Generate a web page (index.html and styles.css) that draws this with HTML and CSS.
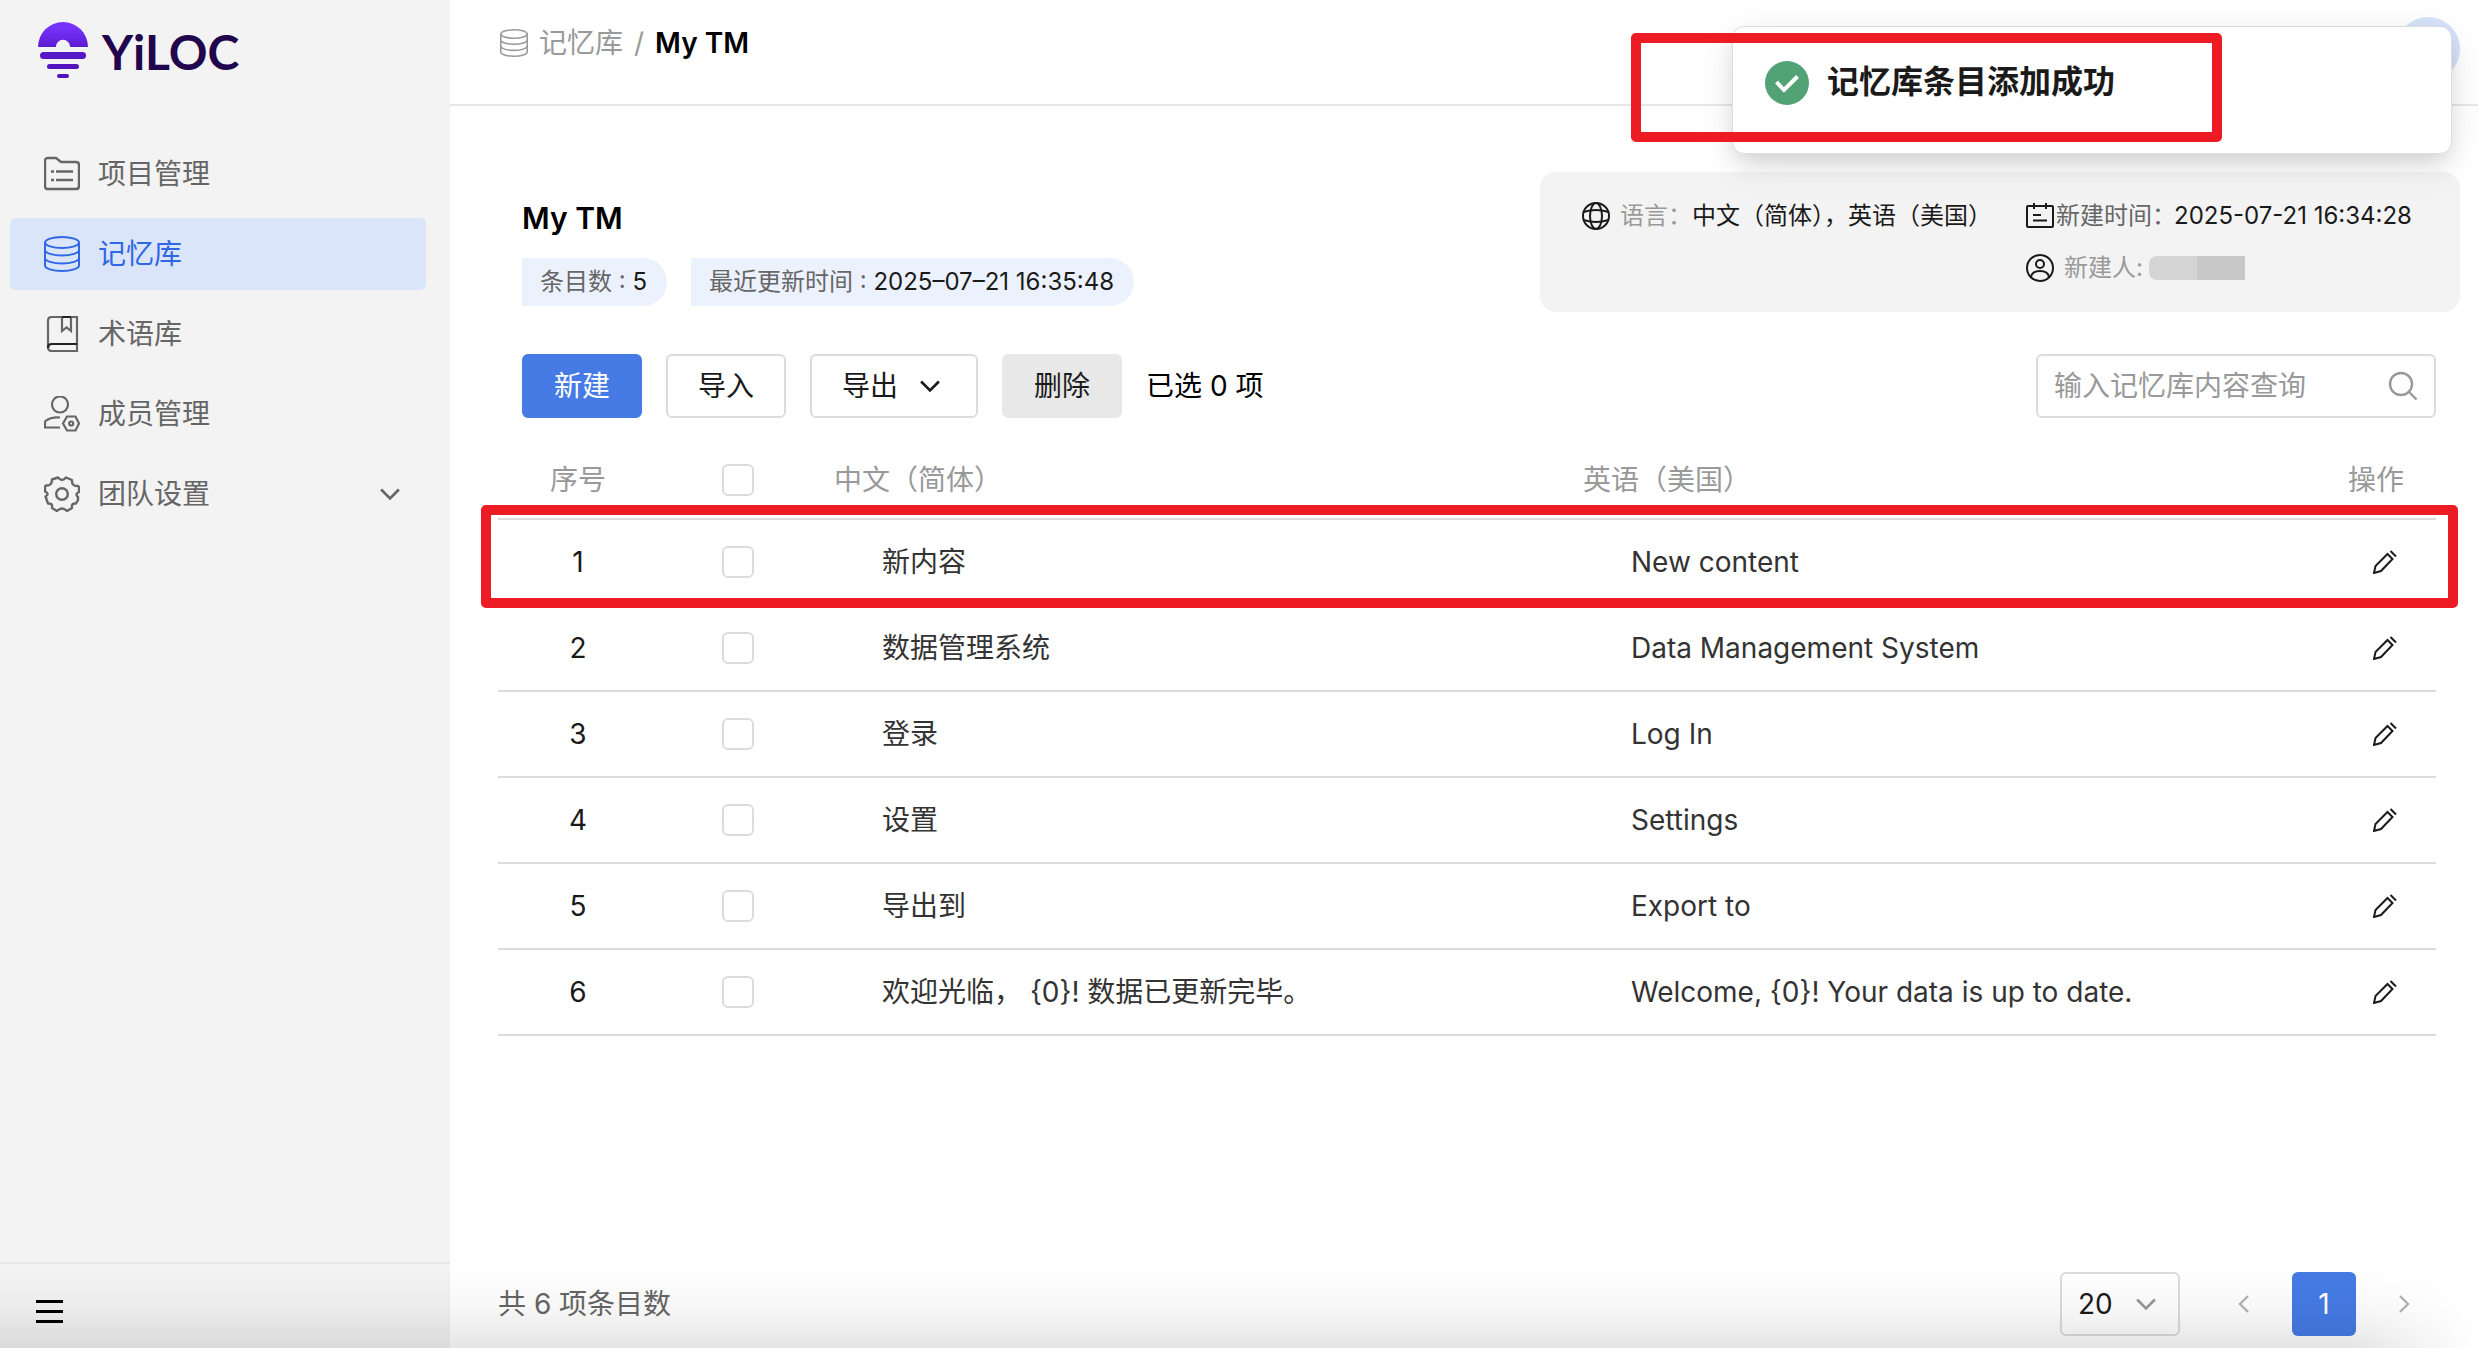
FILE: index.html
```html
<!DOCTYPE html>
<html lang="zh-CN">
<head>
<meta charset="utf-8">
<title>YiLOC - My TM</title>
<link rel="stylesheet" href="styles.css">
</head>
<body>
<svg class="sprite" aria-hidden="true">
  <symbol id="i-db" viewBox="0 0 36 36"><g fill="none" stroke="currentColor" stroke-width="2"><ellipse cx="18" cy="6.500" rx="17" ry="5.500"/><path d="M1 6.500V29.500C1 32.500 8.600 35 18 35s17-2.500 17-5.500V6.500M1 14c0 3 7.600 5.500 17 5.500S35 17 35 14M1 22c0 3 7.600 5.500 17 5.500S35 25 35 22"/></g></symbol>
  <symbol id="i-pencil" viewBox="0 0 24 24"><path fill="none" stroke="currentColor" stroke-width="2" d="M1 23l1.500-7L14.500 4l5 5L8 21zM17.500 1l5.500 5.500"/></symbol>
  <symbol id="i-down" viewBox="0 0 18 12"><path fill="none" stroke="currentColor" stroke-width="2.400" d="M1 2l8 8 8-8"/></symbol>
</svg>

<aside class="sidebar">
  <a class="brand" href="#">
    <svg class="brand-mark" viewBox="0 0 50 56" aria-hidden="true">
      <defs><linearGradient id="g" gradientUnits="userSpaceOnUse" x1="0" y1="0" x2="0" y2="56"><stop offset=".1" stop-color="#7633fb"/><stop offset=".5" stop-color="#5a18cc"/><stop offset="1" stop-color="#4f12b8"/></linearGradient></defs>
      <g fill="url(#g)"><path d="M0 25a25 25 0 0 1 50 0H32.200a7.200 7.200 0 0 0-14.400 0z"/><rect x="2" y="30" width="46" height="7" rx="3.500"/><rect x="9" y="42" width="32" height="5" rx="2.500"/><rect x="19" y="52" width="12" height="4" rx="2"/></g>
    </svg>
    <span class="brand-name">YiLOC</span>
  </a>
  <nav class="nav">
    <a class="nav-item" href="#"><svg viewBox="0 0 36 36"><g fill="none" stroke="currentColor" stroke-width="2.400"><path d="M1 5q0-3 3-3h8l5 4h15q3 0 3 3v21q0 3-3 3H4q-3 0-3-3z"/><path d="M7 15.500h3M12 15.500h17M7 24h3M12 24h17"/></g></svg><span>项目管理</span></a>
    <a class="nav-item active" href="#"><svg><use href="#i-db"/></svg><span>记忆库</span></a>
    <a class="nav-item" href="#"><svg viewBox="0 0 36 36"><g fill="none" stroke="currentColor" stroke-width="2.200"><path d="M33 28V1H8Q4 1 4 5v26q0 4 4 4h25v-7M18 1v14l4.500-3.500L27 15V1"/><path stroke="#222" d="M33 28H8q-4 0-4 4M18 1h9"/></g></svg><span>术语库</span></a>
    <a class="nav-item" href="#"><svg viewBox="0 0 36 36"><g fill="none" stroke="currentColor" stroke-width="2.200"><circle cx="16" cy="8.500" r="8"/><path d="M16 21.500C10 21 4 23 1.500 25q-.5.500-.5 2v4.500h15M23 20.500h8.500l3.500 7-3.500 7H23l-4-7z"/><circle cx="27.200" cy="27.500" r="2"/></g></svg><span>成员管理</span></a>
    <a class="nav-item" href="#"><svg viewBox="0 0 36 36"><g fill="none" stroke="currentColor" stroke-width="2.400" stroke-linejoin="round"><path d="M14 1.500q4 5 8 0l6 2.500q-.5 6.500 6 6l1 1v5q-4.500 2-1 5v3l-2 3.500q-5-.5-4 4.500l-5 3q-5-5-10 0l-5-3q1-5-4-4.500l-2.500-7q4.500-3-.5-5v-5l1-1q6 .5 6-6z"/><circle cx="18" cy="18" r="5.800"/></g></svg><span>团队设置</span><svg class="nav-arrow"><use href="#i-down"/></svg></a>
  </nav>
  <div class="sidebar-foot">
    <button class="menu-btn" aria-label="收起菜单"><span></span><span></span><span></span></button>
  </div>
</aside>

<main class="main">
  <header class="topbar">
    <nav class="crumbs">
      <svg><use href="#i-db"/></svg><a href="#">记忆库</a><span class="slash">/</span><strong>My TM</strong>
    </nav>
    <button class="avatar" aria-label="账户"></button>
  </header>

  <section class="summary">
    <div class="summary-text">
      <h1>My TM</h1>
      <div class="chips">
        <span class="chip">条目数 : <b>5</b></span>
        <span class="chip">最近更新时间 : <b>2025–07–21 16:35:48</b></span>
      </div>
    </div>
    <div class="info">
      <div class="info-line">
        <svg viewBox="0 0 28 28"><g fill="none" stroke="currentColor" stroke-width="2"><circle cx="14" cy="14" r="13"/><ellipse cx="14" cy="14" rx="6" ry="13"/><path d="M1.500 10q12.500-4 25 0M1.500 18q12.500 4 25 0"/></g></svg>
        <span class="light">语言：</span><span class="value">中文（简体），英语（美国）</span>
      </div>
      <div class="info-side">
        <div class="info-line tight">
          <svg viewBox="0 0 28 28"><g fill="none" stroke="currentColor" stroke-width="2"><rect x="1" y="4" width="26" height="21" rx="1"/><path d="M8 1v6M20 1v6M7 13h8M7 18.500h14"/></g></svg>
          <span class="mid">新建时间：</span><span class="value">2025-07-21 16:34:28</span>
        </div>
        <div class="info-line">
          <svg viewBox="0 0 28 28"><g fill="none" stroke="currentColor" stroke-width="2"><circle cx="14" cy="14" r="13"/><circle cx="14" cy="10" r="4"/><path d="M5 23q1-6 9-6t9 6"/></g></svg>
          <span class="light">新建人:</span><span class="mask"></span>
        </div>
      </div>
    </div>
  </section>

  <section class="toolbar">
    <button class="btn primary">新建</button>
    <button class="btn">导入</button>
    <button class="btn drop">导出<svg><use href="#i-down"/></svg></button>
    <button class="btn muted">删除</button>
    <span class="selected">已选 0 项</span>
    <div class="search">
      <input type="text" placeholder="输入记忆库内容查询" aria-label="搜索">
      <svg viewBox="0 0 30 30"><g fill="none" stroke="currentColor" stroke-width="2.400"><circle cx="13" cy="13" r="11"/><path d="M21 21l7.500 7.500"/></g></svg>
    </div>
  </section>

  <section class="entries">
    <table>
      <colgroup><col class="c-num"><col class="c-num"><col><col><col class="c-op"></colgroup>
      <thead><tr><th class="center">序号</th><th class="center"><input type="checkbox" aria-label="全选"></th><th>中文（简体）</th><th>英语（美国）</th><th class="op">操作</th></tr></thead>
      <tbody>
        <tr><td class="center">1</td><td class="center"><input type="checkbox" aria-label="选择 1"></td><td>新内容</td><td>New content</td><td class="op"><button class="edit" aria-label="编辑"><svg><use href="#i-pencil"/></svg></button></td></tr>
        <tr><td class="center">2</td><td class="center"><input type="checkbox" aria-label="选择 2"></td><td>数据管理系统</td><td>Data Management System</td><td class="op"><button class="edit" aria-label="编辑"><svg><use href="#i-pencil"/></svg></button></td></tr>
        <tr><td class="center">3</td><td class="center"><input type="checkbox" aria-label="选择 3"></td><td>登录</td><td>Log In</td><td class="op"><button class="edit" aria-label="编辑"><svg><use href="#i-pencil"/></svg></button></td></tr>
        <tr><td class="center">4</td><td class="center"><input type="checkbox" aria-label="选择 4"></td><td>设置</td><td>Settings</td><td class="op"><button class="edit" aria-label="编辑"><svg><use href="#i-pencil"/></svg></button></td></tr>
        <tr><td class="center">5</td><td class="center"><input type="checkbox" aria-label="选择 5"></td><td>导出到</td><td>Export to</td><td class="op"><button class="edit" aria-label="编辑"><svg><use href="#i-pencil"/></svg></button></td></tr>
        <tr><td class="center">6</td><td class="center"><input type="checkbox" aria-label="选择 6"></td><td>欢迎光临， {0}! 数据已更新完毕。</td><td>Welcome, {0}! Your data is up to date.</td><td class="op"><button class="edit" aria-label="编辑"><svg><use href="#i-pencil"/></svg></button></td></tr>
      </tbody>
    </table>
    <div class="mark mark-row"></div>
  </section>

  <footer class="pager">
    <span class="total">共 6 项条目数</span>
    <div class="size"><select aria-label="每页条数"><option>20</option></select><svg><use href="#i-down"/></svg></div>
    <button class="page" aria-label="上一页"><svg viewBox="0 0 12 18"><path fill="none" stroke="currentColor" stroke-width="2.400" d="M10 1L2 9l8 8"/></svg></button>
    <button class="page current">1</button>
    <button class="page" aria-label="下一页"><svg viewBox="0 0 12 18"><path fill="none" stroke="currentColor" stroke-width="2.400" d="M2 1l8 8-8 8"/></svg></button>
  </footer>
</main>

<div class="toast" role="status">
  <svg viewBox="0 0 44 44"><circle cx="22" cy="22" r="22" fill="#53a275"/><path fill="none" stroke="#fff" stroke-width="4" d="M11.500 21l7.500 8 13.500-13.500"/></svg>
  <span>记忆库条目添加成功</span>
</div>
<div class="mark mark-toast"></div>
<div class="shade"></div>
</body>
</html>
```

FILE: styles.css
```css
* { box-sizing: border-box; }

body {
  margin: 0;
  display: flex;
  min-height: 100vh;
  background: #fff;
  color: #1a1a1a;
  font: 28px/40px Inter, "Noto Sans CJK SC", sans-serif;
}

a { color: inherit; text-decoration: none; }
button, input, select { font: inherit; color: inherit; }
button { padding: 0; border: 0; background: none; }
svg { display: block; flex: none; }
.sprite { position: absolute; width: 0; height: 0; }

/* Sidebar */
.sidebar {
  flex: none;
  width: 450px;
  display: flex;
  flex-direction: column;
  background: #f3f3f3;
  color: #666;
}
.brand {
  display: flex;
  align-items: center;
  gap: 14px;
  height: 100px;
  padding-left: 38px;
}
.brand-mark { width: 50px; height: 56px; }
.brand-name {
  padding-top: 4px;
  color: #21064d;
  font: 700 48px/60px Lato, sans-serif;
}
.nav {
  flex: 1;
  display: flex;
  flex-direction: column;
  gap: 8px;
  padding: 38px 24px 0 10px;
}
.nav-item {
  display: flex;
  align-items: center;
  gap: 18px;
  height: 72px;
  padding: 0 26px 0 34px;
  border-radius: 6px;
}
.nav-item svg { width: 36px; height: 36px; }
.nav-item.active { background: #dbe5f9; color: #2e66e5; }
.nav-item .nav-arrow { width: 20px; height: 14px; margin-left: auto; }
.sidebar-foot {
  height: 86px;
  padding: 36px 36px 0;
  border-top: 2px solid #e7e7e7;
}
.menu-btn {
  display: flex;
  flex-direction: column;
  gap: 7px;
  width: 27px;
}
.menu-btn span { height: 3px; background: #000; }

/* Main column */
.main {
  flex: 1;
  min-width: 0;
  display: flex;
  flex-direction: column;
}
.topbar {
  display: flex;
  justify-content: space-between;
  height: 106px;
  padding: 17px 18px 0 50px;
  border-bottom: 2px solid #e7e7e7;
}
.crumbs {
  display: flex;
  align-items: center;
  gap: 11px;
  height: 52px;
  color: #999;
}
.crumbs svg { width: 28px; height: 28px; }
.crumbs strong { color: #000; font-weight: 600; }
.avatar {
  width: 64px;
  height: 64px;
  border-radius: 50%;
  background: #d6e2fa;
}

.summary {
  display: flex;
  justify-content: space-between;
  padding: 66px 18px 0 72px;
}
.summary-text { padding-top: 26px; }
h1 { margin: 0; color: #000; font-size: 30px; font-weight: 600; line-height: 40px; }
.chips { display: flex; gap: 24px; margin-top: 20px; }
.chip {
  height: 48px;
  padding: 0 20px 0 18px;
  border-radius: 0 24px 24px 0;
  background: #ecf2fd;
  color: #666;
  font-size: 24px;
  line-height: 48px;
}
.chip b { color: #1a1a1a; font-weight: 400; }
.info {
  display: flex;
  gap: 34px;
  height: 140px;
  padding: 26px 40px 0 42px;
  border-radius: 16px;
  background: #f3f3f3;
  font-size: 24px;
  line-height: 36px;
}
.info-side { display: flex; flex-direction: column; gap: 16px; min-width: 394px; }
.info-line { display: flex; align-items: center; gap: 10px; height: 36px; }
.info-line svg { width: 28px; height: 28px; }
.info-line .value { margin-left: -10px; }
.info-line .mask { margin-left: -4px; }
.tight { gap: 2px; }
.tight .value { margin-left: -4px; }
.light { color: #999; }
.mid { color: #666; }
.mask {
  width: 96px;
  height: 24px;
  border-radius: 8px 0 0 8px;
  background: linear-gradient(90deg, #d4d4d4 50%, #c8c8c8 50%);
}

/* Toolbar */
.toolbar {
  display: flex;
  align-items: center;
  gap: 24px;
  padding: 42px 42px 0 72px;
}
.btn {
  width: 120px;
  height: 64px;
  border: 2px solid #dcdcdc;
  border-radius: 6px;
  background: #fff;
}
.primary { border-color: #467be6; background: #467be6; color: #fff; }
.muted { border-color: #e8e8e8; background: #e8e8e8; }
.drop {
  display: flex;
  align-items: center;
  gap: 22px;
  width: 168px;
  padding-left: 30px;
}
.drop svg { width: 20px; height: 14px; }
.selected { color: #000; }
.search {
  display: flex;
  align-items: center;
  width: 400px;
  height: 64px;
  margin-left: auto;
  padding: 0 16px;
  border: 2px solid #dcdcdc;
  border-radius: 6px;
  color: #999;
}
.search input { flex: 1; min-width: 0; padding: 0; border: 0; outline: 0; background: none; }
.search input::placeholder { color: #999; opacity: 1; }
.search svg { width: 30px; height: 30px; }

/* Entries */
.entries { position: relative; margin: 22px 42px 0 48px; }
table { width: 100%; border-collapse: separate; border-spacing: 0; table-layout: fixed; }
.c-num { width: 160px; }
.c-op { width: 120px; }
th, td { padding: 0 0 0 16px; border-bottom: 2px solid #dcdcdc; text-align: left; }
th { height: 80px; color: #999; font-weight: 400; }
td { height: 86px; padding-left: 64px; color: #333; }
th, th.center, th.op { padding-top: 2px; }
th.center, td.center, th.op { padding-left: 0; text-align: center; }
td.center { color: #1a1a1a; }
td.op { padding-left: 57px; }
input[type="checkbox"] {
  appearance: none;
  display: block;
  width: 32px;
  height: 32px;
  margin: 0 auto;
  border: 2px solid #dcdcdc;
  border-radius: 6px;
  background: #fff;
}
.edit { display: block; color: #1a1a1a; }
.edit svg { width: 24px; height: 24px; }

/* Pagination */
.pager {
  display: flex;
  align-items: center;
  gap: 16px;
  margin-top: auto;
  padding: 0 42px 12px 48px;
}
.total { margin-right: auto; color: #666; }
.size { position: relative; margin-right: 16px; }
.size select {
  appearance: none;
  width: 120px;
  height: 64px;
  padding: 0 16px;
  border: 2px solid #dcdcdc;
  border-radius: 6px;
  background: #fff;
}
.size svg {
  position: absolute;
  top: 25px;
  right: 24px;
  width: 20px;
  height: 14px;
  color: #999;
  pointer-events: none;
}
.page {
  display: grid;
  place-items: center;
  width: 64px;
  height: 64px;
  border-radius: 6px;
  color: #b4b4b4;
}
.page svg { width: 12px; height: 18px; }
.current { background: #467be6; color: #fff; }

/* Overlays */
.toast {
  position: absolute;
  top: 26px;
  right: 26px;
  width: 720px;
  height: 128px;
  display: flex;
  gap: 18px;
  padding: 34px 32px;
  border: 1px solid #dcdcdc;
  border-radius: 12px;
  background: #fff;
  box-shadow: 0 12px 24px -4px rgba(0, 0, 0, .16), 0 8px 48px rgba(0, 0, 0, .06);
  font-size: 32px;
  font-weight: 700;
  line-height: 42px;
}
.toast svg { width: 44px; height: 44px; }
.mark { position: absolute; border: 10px solid #ed1c24; border-radius: 5px; }
.mark-toast { top: 33px; right: 256px; width: 591px; height: 109px; }
.mark-row { top: 65px; right: -22px; left: -17px; height: 103px; }
.shade {
  position: fixed;
  right: 0;
  bottom: 0;
  left: 0;
  height: 80px;
  background: linear-gradient(rgba(0, 0, 0, 0), rgba(0, 0, 0, .03) 50%, rgba(0, 0, 0, .1));
  -webkit-mask-image: linear-gradient(90deg, #000 95%, transparent);
  mask-image: linear-gradient(90deg, #000 95%, transparent);
  pointer-events: none;
}
```
